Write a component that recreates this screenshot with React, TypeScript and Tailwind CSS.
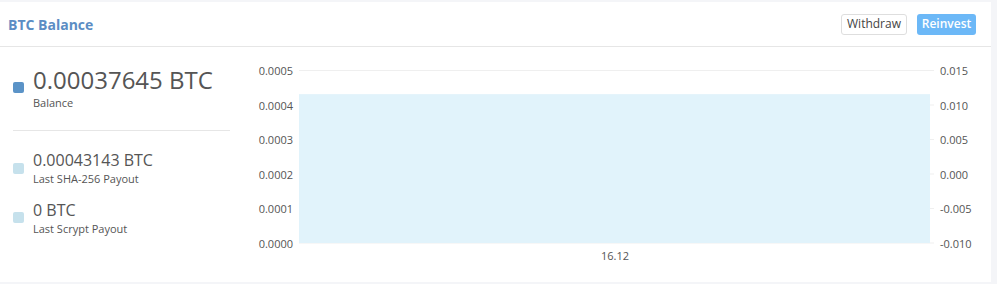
const leftTicks = ['0.0005', '0.0004', '0.0003', '0.0002', '0.0001', '0.0000']
const rightTicks = ['0.015', '0.010', '0.005', '0.000', '-0.005', '-0.010']

// plot area inside the svg
const PLOT_LEFT = 59
const PLOT_RIGHT = 694
const GRID_TOP = 23.5
const GRID_STEP = 34.5
const MAX_VALUE = 0.0005
const BAR_VALUE = 0.00043143

function BalanceChart() {
  const bottom = GRID_TOP + GRID_STEP * 5
  const barTop = bottom - (BAR_VALUE / MAX_VALUE) * (GRID_STEP * 5)

  return (
    <svg
      width={751}
      height={235}
      className="block"
      style={{ fontFamily: '"Open Sans", "DejaVu Sans", sans-serif' }}
    >
      {leftTicks.map((tick, i) => {
        const y = GRID_TOP + GRID_STEP * i
        return (
          <g key={tick}>
            <line x1={PLOT_LEFT} x2={PLOT_RIGHT} y1={y} y2={y} stroke="#efefef" strokeWidth={1} />
            <text x={53} y={y} textAnchor="end" dominantBaseline="central" fontSize={11} fill="#555">
              {tick}
            </text>
            <text x={700} y={y} dominantBaseline="central" fontSize={11} fill="#555">
              {rightTicks[i]}
            </text>
          </g>
        )
      })}
      <rect x={PLOT_LEFT} y={barTop} width={631} height={bottom - barTop} fill="#e1f3fb" />
      <text x={375} y={208.5} textAnchor="middle" dominantBaseline="central" fontSize={11} fill="#555">
        16.12
      </text>
    </svg>
  )
}

export default function App() {
  return (
    <div
      className="h-[284px] w-[997px] bg-[#f4f5f8] pt-[2px] pr-[6px] pb-[2px] text-[#555]"
      style={{ fontFamily: '"Open Sans", "DejaVu Sans", sans-serif' }}
    >
      <div className="h-[280px] bg-white">
        <div className="flex h-[45px] items-center justify-between border-b border-[#e6e6e6] pl-[8px] pr-[15px]">
          <h2 className="text-[14px] font-bold text-[#5b8dc4]">BTC Balance</h2>
          <div className="flex items-center gap-[10px]">
            <button
              type="button"
              className="h-[21px] w-[66px] rounded-[3px] border border-[#dedede] bg-white text-[12px] leading-none text-[#444]"
            >
              Withdraw
            </button>
            <button
              type="button"
              className="h-[21px] w-[59px] rounded-[3px] bg-[#6cb8f7] text-[12px] font-semibold leading-none text-white"
            >
              Reinvest
            </button>
          </div>
        </div>

        <div className="flex">
          <div className="w-[240px] pl-[13px] pr-[10px]">
            <div className="flex gap-[9px] pt-[19px]">
              <span className="mt-[16px] h-[11px] w-[11px] shrink-0 rounded-[2px] bg-[#5b93c7]" />
              <div>
                <div className="text-[24px] leading-[28px]">0.00037645 BTC</div>
                <div className="mt-[2px] text-[11px] leading-[14px]">Balance</div>
              </div>
            </div>

            <div className="mt-[20px] border-t border-[#e6e6e6]" />

            <div className="flex gap-[9px] pt-[19px]">
              <span className="mt-[13px] h-[11px] w-[11px] shrink-0 rounded-[2px] bg-[#c6e1ec]" />
              <div>
                <div className="text-[16px] leading-[20px]">0.00043143 BTC</div>
                <div className="mt-[2px] text-[11px] leading-[14px]">Last SHA-256 Payout</div>
              </div>
            </div>

            <div className="flex gap-[9px] pt-[14px]">
              <span className="mt-[12px] h-[11px] w-[11px] shrink-0 rounded-[2px] bg-[#c6e1ec]" />
              <div>
                <div className="text-[16px] leading-[20px]">0 BTC</div>
                <div className="mt-[2px] text-[11px] leading-[14px]">Last Scrypt Payout</div>
              </div>
            </div>
          </div>

          <BalanceChart />
        </div>
      </div>
    </div>
  )
}
